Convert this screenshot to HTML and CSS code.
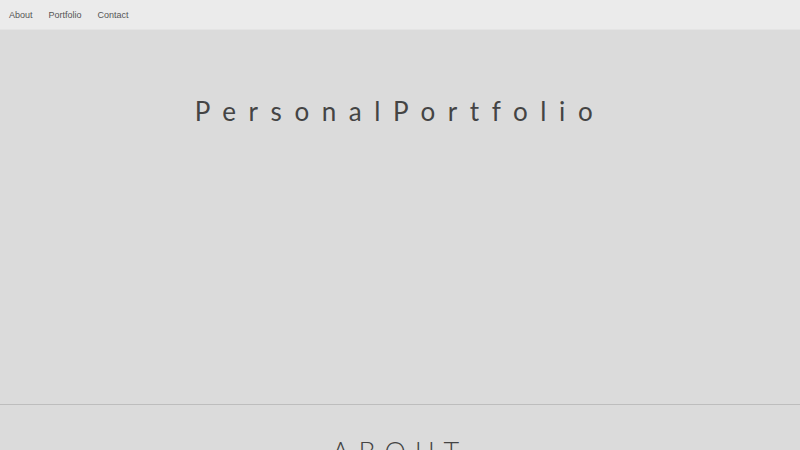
FILE: index.html
```html
<!DOCTYPE html>
<html lang="en">
<head>
    <meta charset="UTF-8">
    <meta name="viewport" content="width=device-width, initial-scale=1.0">
    <title>Personal Portfolio</title>
    <link rel="stylesheet" href="styles.css">
</head>
<body>

<nav class="navbar">
    <a href="#about">About</a>
    <a href="#portfolio">Portfolio</a>
    <a href="#contact">Contact</a>
</nav>

<header class="hero">
    <h1 class="hero-title">PersonalPortfolio</h1>
</header>

<section class="section" id="about">
    <h2 class="section-title">ABOUT</h2>
</section>

</body>
</html>
```

FILE: styles.css
```css
body {
    margin: 0;
    padding: 0;
    background-color: #dbdbdb;
    color: #444;
    font-family: Lato, "Noto Sans", sans-serif;
}
.navbar {
    display: flex;
    height: 30px;
    align-items: center;
    padding: 0 9px;
    gap: 16px;
    background-color: #ebebeb;
    border-bottom: 1px solid #e4e4e4;
    box-sizing: border-box;
}
.navbar a {
    font-family: "Liberation Sans", Arial, sans-serif;
    font-size: 9px;
    color: #555;
    text-decoration: none;
}
.hero {
    height: 374px;
    display: flex;
    justify-content: center;
    border-bottom: 1px solid #bdbdbd;
}
.hero-title {
    margin: 65px 0 0;
    font-size: 26px;
    font-weight: 400;
    letter-spacing: 12.6px;
    color: #444;
}
.section {
    text-align: center;
}
.section-title {
    margin: 30px 0 0;
    font-size: 27px;
    font-weight: 300;
    letter-spacing: 9px;
    color: #444;
}
```
